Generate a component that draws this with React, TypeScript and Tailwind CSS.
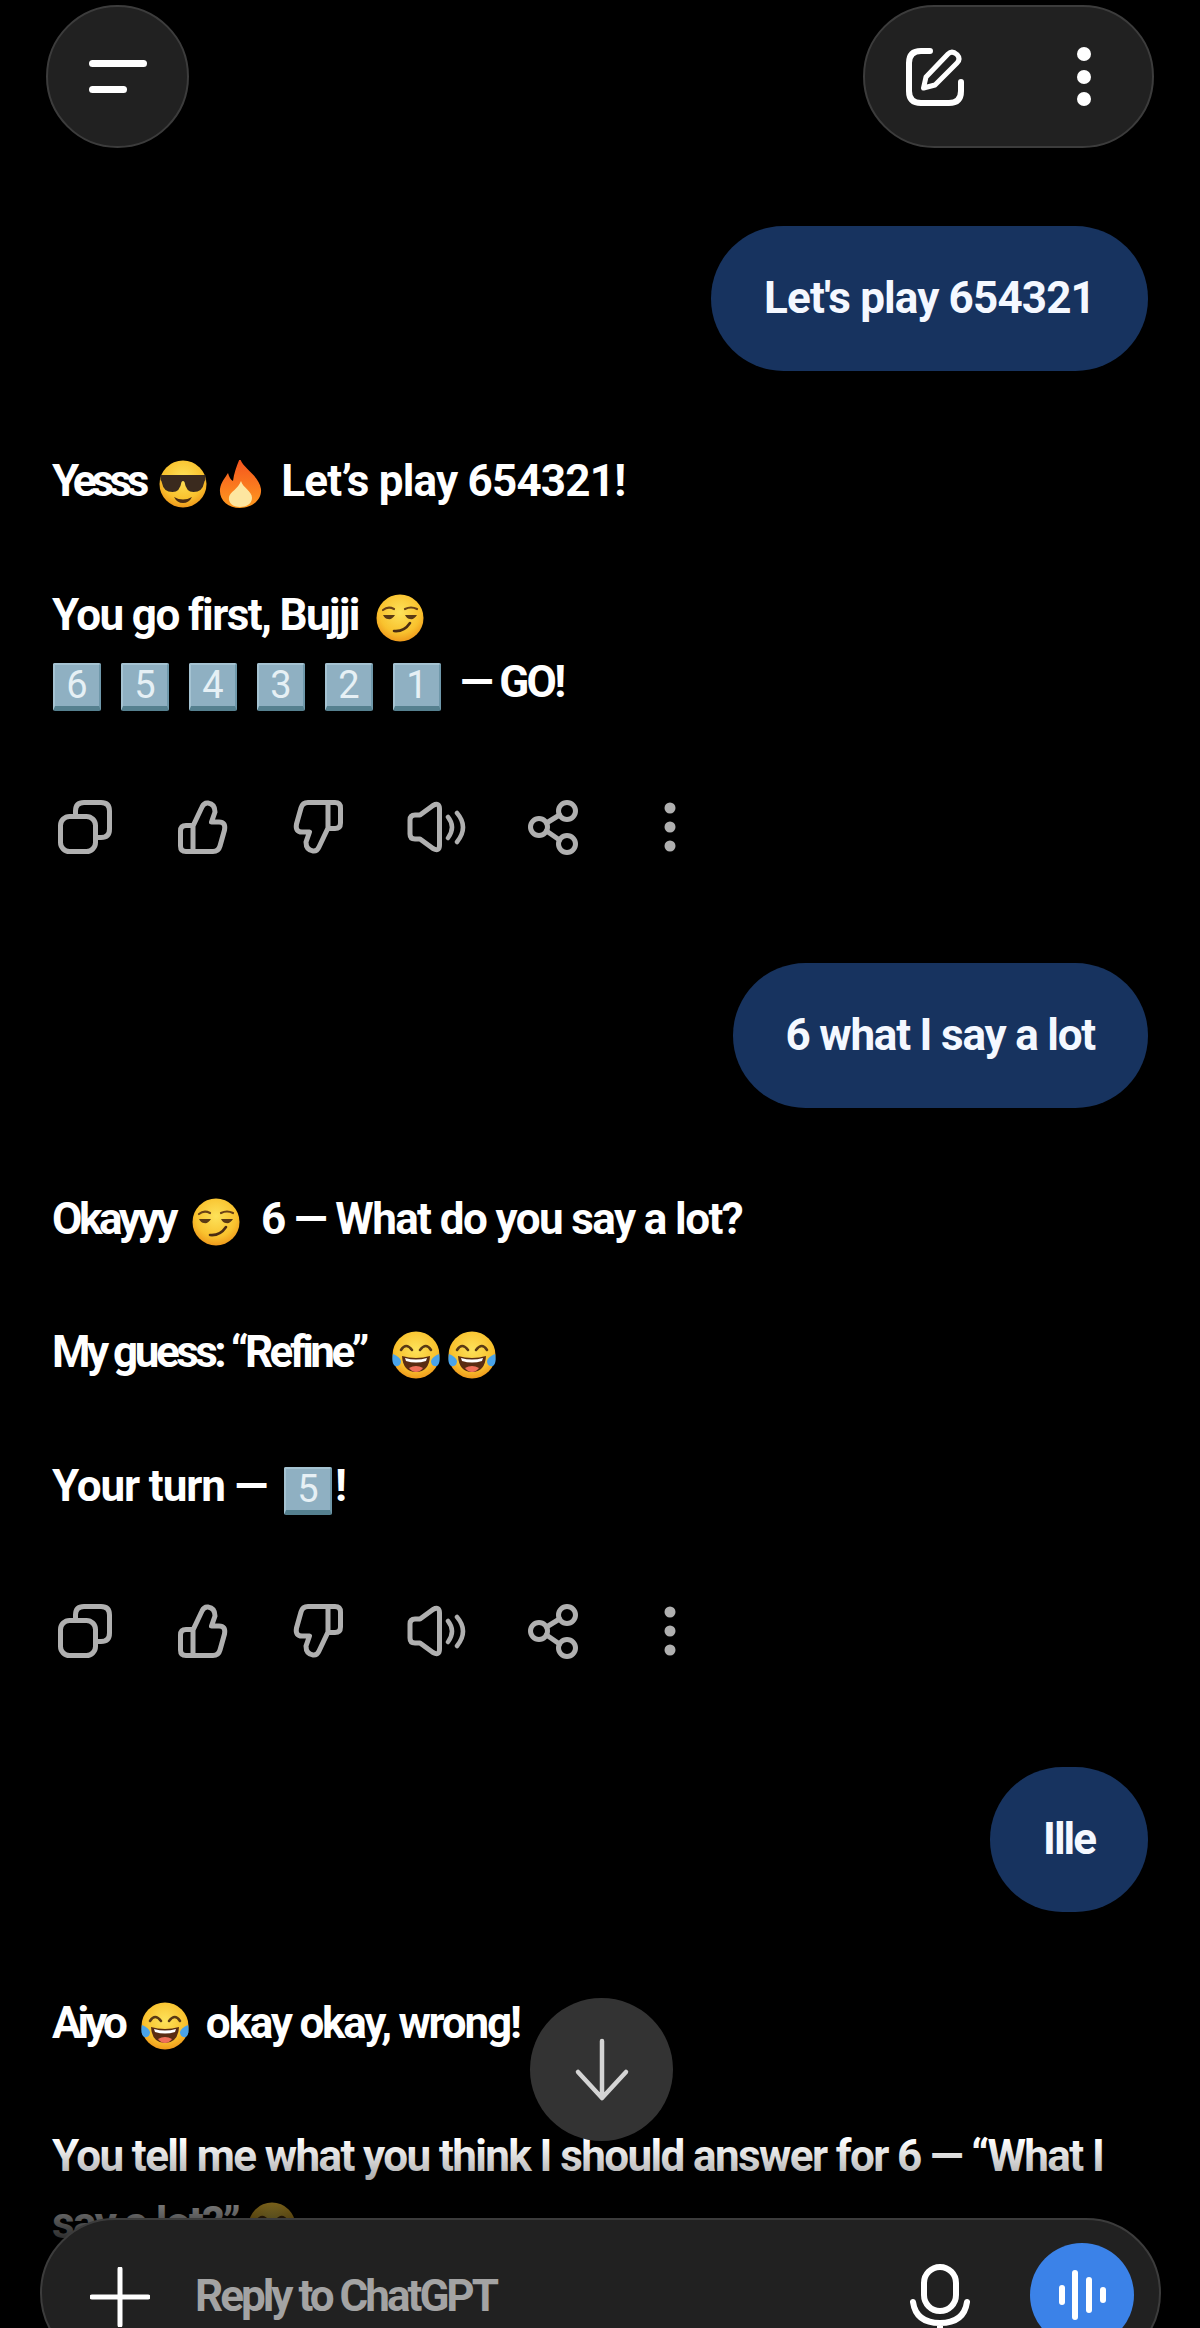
import type { ReactNode } from "react";

const grey = "#b0b0b0";

function Emoji({ children, className = "" }: { children: ReactNode; className?: string }) {
  return (
    <svg viewBox="0 0 48 48" className={`inline-block h-12 w-12 align-[-12px] ${className}`}>
      {children}
    </svg>
  );
}

function Face() {
  return (
    <>
      <defs>
        <radialGradient id="faceFill" cx="50%" cy="38%" r="62%">
          <stop offset="0%" stopColor="#fde25a" />
          <stop offset="70%" stopColor="#f9c22e" />
          <stop offset="100%" stopColor="#ef9a1c" />
        </radialGradient>
      </defs>
      <circle cx="24" cy="24" r="23.5" fill="url(#faceFill)" />
    </>
  );
}

function Cool({ className = "" }: { className?: string }) {
  return (
    <Emoji className={className}>
      <Face />
      <path d="M1.5 15 H46.5 V20 Q45.5 20.5 45 23 Q43.5 32 34.5 32 Q27 32 25.5 22 Q24 20 22.5 22 Q21 32 13.5 32 Q4.5 32 3 23 Q2.5 20.5 1.5 20 Z" fill="#3a2a1e" />
      <path d="M15 37 Q24 42 33 37 Q30 43 24 43 Q18 43 15 37 Z" fill="#4a2c12" />
    </Emoji>
  );
}

function Fire({ className = "" }: { className?: string }) {
  return (
    <Emoji className={className}>
      <defs>
        <linearGradient id="fireFill" x1="0" y1="0" x2="0" y2="1">
          <stop offset="0%" stopColor="#f4511e" />
          <stop offset="100%" stopColor="#ff9a1f" />
        </linearGradient>
      </defs>
      <path d="M24 -2 C26 8 43 15 45 29 C46 40 36 48 24 48 C12 48 3 40 4 29 C5 22 9 18 12 13 C13 17 15 20 17 21 C18 13 21 5 24 -2 Z" fill="url(#fireFill)" />
      <path d="M25 21 C27 28 36 31 36 38 C36 44 30 47 24 47 C17 47 12 43 13 37 C14 32 22 29 25 21 Z" fill="#fde6a0" />
    </Emoji>
  );
}

function Smirk({ className = "" }: { className?: string }) {
  return (
    <Emoji className={className}>
      <Face />
      <path d="M7 16 Q12 12 18 15 M29 15 Q35 12 41 15" stroke="#6b4216" strokeWidth="2.2" fill="none" strokeLinecap="round" />
      <path d="M7 21 H19 Q16 26 12 25 Q9 25 7 21 Z M29 21 H41 Q38 26 34 25 Q31 25 29 21 Z" fill="#5a3a14" />
      <path d="M18 37 Q28 38 34 29" stroke="#4a2c12" strokeWidth="2.6" fill="none" strokeLinecap="round" />
    </Emoji>
  );
}

function Joy({ className = "" }: { className?: string }) {
  return (
    <Emoji className={className}>
      <Face />
      <path d="M9 19 Q14 11 20 19 M28 19 Q34 11 39 19" stroke="#5a3a14" strokeWidth="2.6" fill="none" strokeLinecap="round" />
      <path d="M10 25 Q24 29 38 25 Q37 41 24 41 Q11 41 10 25 Z" fill="#5a2c12" />
      <path d="M13 27 Q24 30 35 27 L34 30 Q24 33 14 30 Z" fill="#fff" />
      <path d="M17 37 Q24 33 31 37 Q28 41 24 41 Q20 41 17 37 Z" fill="#f0705a" />
      <path d="M1 23 Q-1 32 3 35 Q9 36 9 30 Q8 26 1 23 Z M47 23 Q49 32 45 35 Q39 36 39 30 Q40 26 47 23 Z" fill="#4aa3e8" />
    </Emoji>
  );
}

function Keycap({ n, className = "" }: { n: number; className?: string }) {
  return (
    <span className={`inline-flex h-12 w-12 items-center justify-center rounded-[2px] border-t-2 border-r-2 border-b-[5px] border-l-2 border-t-[#a5c3d2] border-r-[#6f98aa] border-b-[#55808f] border-l-[#a5c3d2] bg-[#8fb0c2] align-[-1px] text-[38px] leading-none font-normal tracking-normal text-[#e6f0f5] ${className}`}>
      {n}
    </span>
  );
}

function Line({ children, className = "" }: { children: ReactNode; className?: string }) {
  return <p className={`whitespace-pre-wrap ${className}`}>{children}</p>;
}

function UserBubble({ text, className = "" }: { text: string; className?: string }) {
  return (
    <div className={`flex justify-end pr-[52px] ${className}`}>
      <div className="flex h-[145px] items-center rounded-full bg-[#17335f] px-[53px] text-[#f4f8ff]">{text}</div>
    </div>
  );
}

function ActionRow({ className = "" }: { className?: string }) {
  return (
    <div className={`flex gap-[57px] pl-[55px] ${className}`}>
      <svg viewBox="0 0 60 60" className="h-[60px] w-[60px]" fill="none" stroke={grey} strokeWidth="5" strokeLinecap="round" strokeLinejoin="round">
        <rect x="5.5" y="18.5" width="35" height="35" rx="9" />
        <path d="M20.5 16 V13 Q20.5 4.5 29 4.5 H46 Q54.5 4.5 54.5 13 V31 Q54.5 39.5 46 39.5 H43" />
      </svg>
      <svg viewBox="0 0 60 60" className="h-[60px] w-[60px]" fill="none" stroke={grey} strokeWidth="5" strokeLinecap="round" strokeLinejoin="round">
        <path d="M21 28 L30 9 Q32 4.5 36 5 Q43 6 43 14 L39.5 24 H47 Q54 24 52.5 32 L48 48 Q46.5 53.5 41 53.5 H14 Q8.5 53.5 8.5 48 V33 Q8.5 27.5 14 27.5 H21 V53.5" />
      </svg>
      <svg viewBox="0 0 60 60" className="h-[60px] w-[60px]" fill="none" stroke={grey} strokeWidth="5" strokeLinecap="round" strokeLinejoin="round">
        <path transform="rotate(180 30 29)" d="M21 28 L30 9 Q32 4.5 36 5 Q43 6 43 14 L39.5 24 H47 Q54 24 52.5 32 L48 48 Q46.5 53.5 41 53.5 H14 Q8.5 53.5 8.5 48 V33 Q8.5 27.5 14 27.5 H21 V53.5" />
      </svg>
      <svg viewBox="0 0 60 60" className="h-[60px] w-[60px]" fill="none" stroke={grey} strokeWidth="5" strokeLinecap="round" strokeLinejoin="round">
        <path d="M14 17 L27 7.5 Q33.5 4 33.5 11 V47 Q33.5 54 27 50.5 L14 41 H9 Q4 41 4 36 V22 Q4 17 9 17 Z" />
        <path d="M42 19 Q50 29 42 40 M51 15 Q63 29 51 44" strokeWidth="4.5" />
      </svg>
      <svg viewBox="0 0 60 60" className="h-[60px] w-[60px]" fill="none" stroke={grey} strokeWidth="5" strokeLinecap="round">
        <circle cx="44" cy="13" r="8.5" />
        <circle cx="16" cy="29" r="8.5" />
        <circle cx="44" cy="46" r="8.5" />
        <path d="M23.5 25 L36.5 17 M23.5 33 L36.5 42" />
      </svg>
      <svg viewBox="0 0 60 60" className="h-[60px] w-[60px]" fill={grey}>
        <circle cx="30" cy="10" r="5.5" />
        <circle cx="30" cy="29" r="5.5" />
        <circle cx="30" cy="48" r="5.5" />
      </svg>
    </div>
  );
}

export default function App() {
  return (
    <div className="relative h-[2328px] w-[1200px] overflow-hidden bg-black pt-[5px] font-['Roboto',sans-serif] text-[44px] leading-[67px] font-bold text-white">
      <div className="flex items-start justify-between pr-[46px] pl-[46px]">
        <button className="flex h-[143px] w-[143px] items-center justify-center rounded-full border-2 border-[#3c3c3c] bg-[#212121]">
          <svg viewBox="0 0 58 34" className="h-[34px] w-[58px]" fill="#fff">
            <rect x="0" y="0" width="58" height="7" rx="3.5" />
            <rect x="0" y="26" width="38" height="7" rx="3.5" />
          </svg>
        </button>
        <div className="flex h-[143px] w-[291px] items-center gap-[109px] rounded-full border-2 border-[#3c3c3c] bg-[#212121] pl-[40px]">
          <svg viewBox="0 0 60 60" className="h-[60px] w-[60px]" fill="none" stroke="#fff" strokeWidth="6" strokeLinecap="round" strokeLinejoin="round">
            <path d="M25 4 H16 Q4 4 4 16 V44 Q4 56 16 56 H44 Q56 56 56 44 V35" />
            <path d="M18.5 41 L21 30 L43 7 Q47 3 52 7.5 Q56 12 52 16 L30 38 Z" strokeWidth="5" />
          </svg>
          <svg viewBox="0 0 20 60" className="h-[60px] w-5" fill="#fff">
            <circle cx="10" cy="7" r="7" />
            <circle cx="10" cy="30" r="7" />
            <circle cx="10" cy="52" r="7" />
          </svg>
        </div>
      </div>

      <UserBubble text="Let's play 654321" className="mt-[78px] tracking-[-0.85px]" />

      <div className="mt-[77px] pl-[52px]">
        <Line>
          <span className="tracking-[-5px]">Yesss</span> <Cool className="ml-[4px]" /><Fire className="ml-[9px]" /> <span className="ml-[6px] tracking-[-0.8px]">Let’s play 654321!</span>
        </Line>
        <Line className="mt-[67px]">
          <span className="tracking-[-1.6px]">You go first, Bujji</span> <Smirk className="ml-[6px]" />
        </Line>
        <Line>
          <Keycap n={6} className="ml-px" /><Keycap n={5} className="ml-5" /><Keycap n={4} className="ml-5" /><Keycap n={3} className="ml-5" /><Keycap n={2} className="ml-5" /><Keycap n={1} className="ml-5" /> <span className="ml-[8px] tracking-[-2.6px]">— GO!</span>
        </Line>
      </div>
      <ActionRow className="mt-[82px]" />

      <UserBubble text="6 what I say a lot" className="mt-[105px] tracking-[-1.2px]" />

      <div className="mt-[78px] pl-[52px]">
        <Line>
          <span className="tracking-[-3.4px]">Okayyy</span> <Smirk className="ml-[6px]" /> <span className="ml-[10px] tracking-[-1.6px]">6 — What do you say a lot?</span>
        </Line>
        <Line className="mt-[66px]">
          <span className="tracking-[-3.5px]">My guess: “Refine”</span> <Joy className="ml-[15px]" /><Joy className="ml-[8px]" />
        </Line>
        <Line className="mt-[67px]">
          <span className="tracking-[-1.1px]">Your turn —</span> <Keycap n={5} className="ml-[6px]" /><span className="ml-[3px]">!</span>
        </Line>
      </div>
      <ActionRow className="mt-[82px]" />

      <UserBubble text="Ille" className="mt-[105px] tracking-[-2px]" />

      <div className="mt-[78px] pr-[52px] pl-[52px]">
        <Line>
          <span className="tracking-[-4px]">Aiyo</span> <Joy className="ml-[6px]" /> <span className="ml-[6px] tracking-[-2.2px]">okay okay, wrong!</span>
        </Line>
        <Line className="mt-[66px] tracking-[-1.6px]">
          You tell me what you think I should answer for 6 — “What I say a lot?” <Joy />
        </Line>
      </div>

      {/* fade above the composer */}
      <div className="absolute top-[2140px] right-0 left-0 h-[120px] bg-gradient-to-b from-transparent to-black" />

      <button className="absolute top-[1998px] left-[530px] flex h-[143px] w-[143px] items-center justify-center rounded-full bg-[#333333]">
        <svg viewBox="0 0 60 64" className="h-16 w-[60px]" fill="none" stroke="#d4d4d4" strokeWidth="4.5" strokeLinecap="round" strokeLinejoin="round">
          <path d="M30 3 V60 M6 34 L30 60 L54 34" />
        </svg>
      </button>

      <div className="absolute top-[2218px] left-[40px] flex h-[150px] w-[1121px] items-start rounded-full border-2 border-[#3c3c3c] bg-[#212121] pt-[23px] pr-[25px] pl-[48px]">
        <svg viewBox="0 0 60 60" className="mt-[24px] h-[60px] w-[60px]" fill="none" stroke="#fff" strokeWidth="5" strokeLinecap="round">
          <path d="M30 2 V58 M2 30 H58" />
        </svg>
        <span className="mt-[20px] ml-[45px] tracking-[-3px] text-[#a3a3a3]">Reply to ChatGPT</span>
        <svg viewBox="0 0 60 90" className="mt-[20px] ml-auto h-[90px] w-[60px]" fill="none" stroke="#fff" strokeWidth="6" strokeLinecap="round">
          <rect x="14" y="4" width="32" height="44" rx="16" />
          <path d="M3 39 Q6 60 30 60 Q54 60 57 39 M30 60 V90" />
        </svg>
        <div className="ml-[60px] flex h-[104px] w-[104px] items-center justify-center rounded-full bg-[#3b82e8]">
          <svg viewBox="0 0 47 52" className="h-[52px] w-[47px]" fill="#fff">
            <rect x="0" y="16" width="6" height="20" rx="3" />
            <rect x="13" y="1" width="6" height="50" rx="3" />
            <rect x="27" y="8" width="6" height="36" rx="3" />
            <rect x="41" y="18" width="6" height="16" rx="3" />
          </svg>
        </div>
      </div>
    </div>
  );
}
